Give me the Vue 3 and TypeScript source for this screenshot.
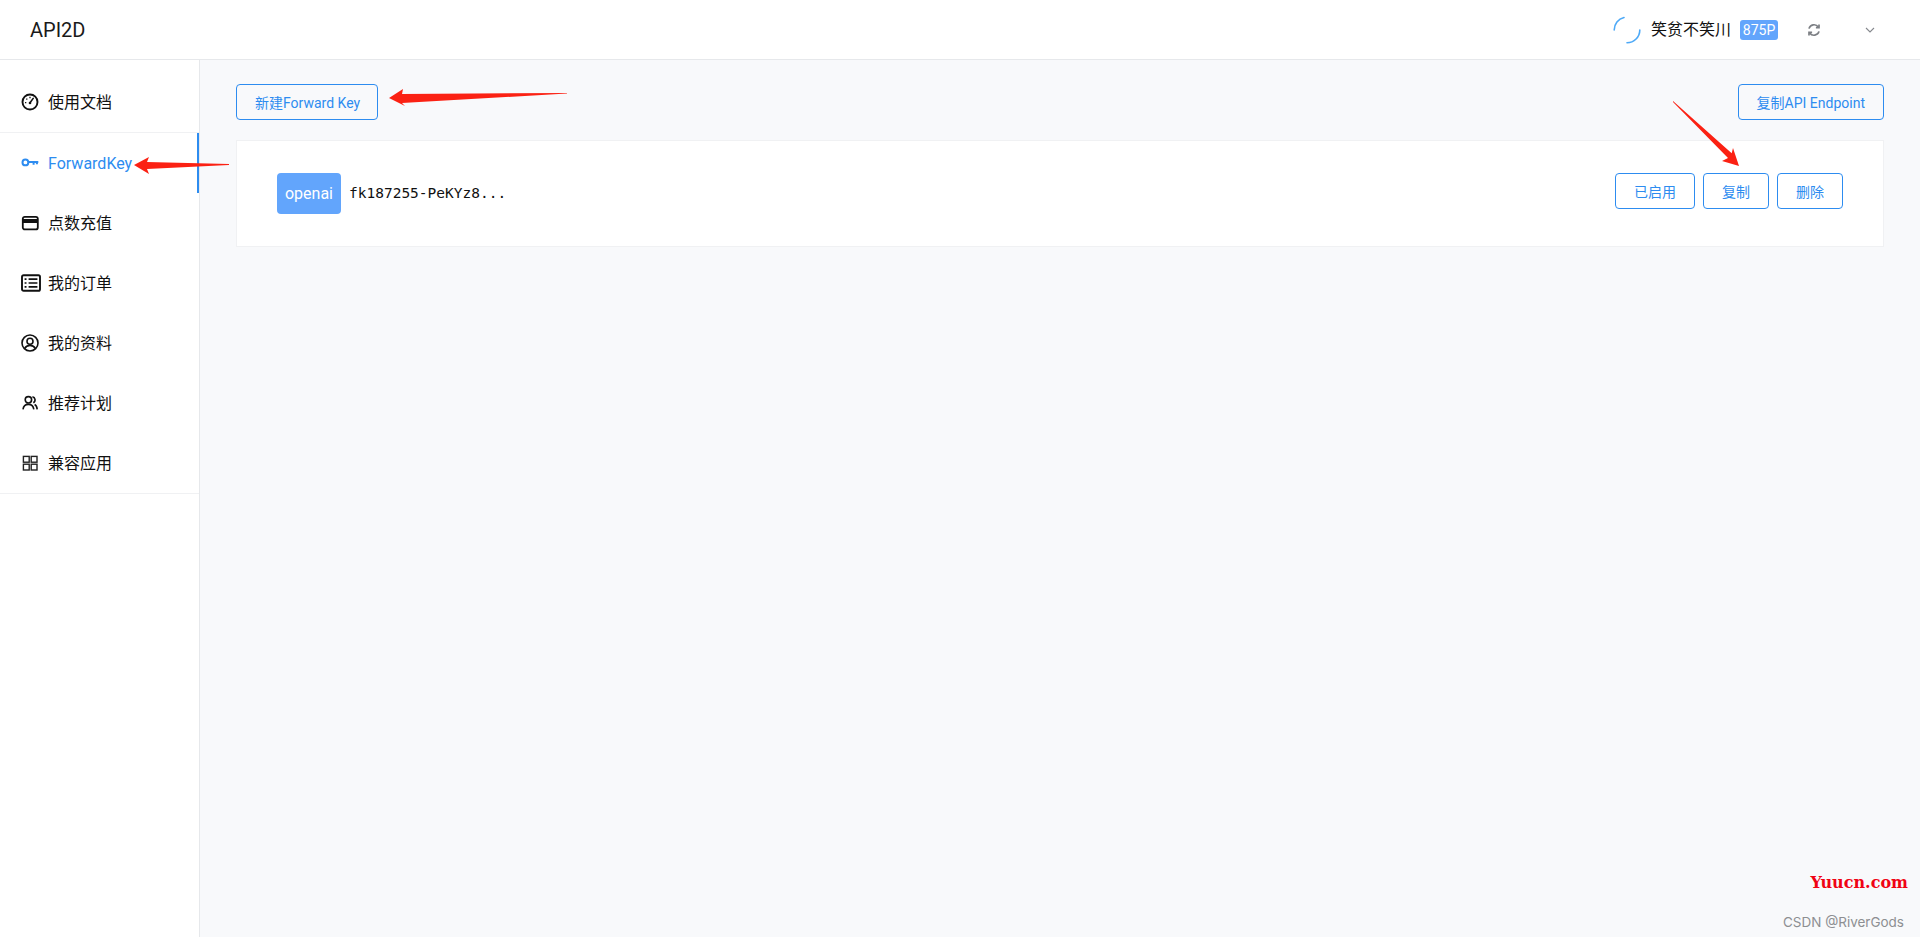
<script setup lang="ts">
const rows = ['使用文档', 'ForwardKey', '点数充值', '我的订单', '我的资料', '推荐计划', '兼容应用']
</script>

<template>
  <div class="page">
    <header class="top">
      <div class="brand">API2D</div>
      <div class="user">
        <svg class="spin" width="28" height="28" viewBox="0 0 28 28" fill="none" stroke="#4da9f7" stroke-width="1.6" stroke-linecap="round">
          <path d="M1.2 14A12.8 12.8 0 0 1 11 1.5" />
          <path d="M26.8 14A12.8 12.8 0 0 1 14 26.8" />
        </svg>
        <span class="name">笑贫不笑川</span>
        <span class="points">875P</span>
        <svg class="refresh" width="14" height="14" viewBox="0 0 14 14" fill="none" stroke="#7c7f84" stroke-width="1.7">
          <path d="M2 5.6A5.2 5.2 0 0 1 11.3 4" />
          <path d="M12 8.4A5.2 5.2 0 0 1 2.7 10" />
          <path d="M12 1.4V4.6H8.9" />
          <path d="M2 12.6V9.4H5.1" />
        </svg>
        <svg class="chev" width="12" height="12" viewBox="0 0 12 12" fill="none" stroke="#85888d" stroke-width="1.1">
          <path d="M2 4l4 4 4-4" />
        </svg>
      </div>
    </header>
    <div class="body">
      <aside class="side">
        <nav class="menu">
          <a v-for="(label, i) in rows" :key="label" class="row" :class="{ first: i === 0, active: i === 1 }">
            <span class="ico">
              <svg v-if="i === 0" width="18" height="18" viewBox="0 0 18 18" fill="none" stroke="#111" stroke-width="1.9">
                <circle cx="9" cy="9" r="7.5" />
                <path d="M9 9.8L12.2 5.4" stroke-linecap="round" stroke-width="1.6" />
                <circle cx="9" cy="10" r="1.3" fill="#111" stroke="none" />
                <path d="M9 3.8v1.4M4 9.6h1.3M5.4 5.6l.9.9" stroke-width="1.3" />
              </svg>
              <svg v-else-if="i === 1" width="18" height="18" viewBox="0 0 18 18" fill="none" stroke="#2d8cf0" stroke-width="2">
                <circle cx="4.4" cy="8.4" r="2.9" />
                <path d="M7.3 8h10M12.6 8v2.8M15.9 8v2.2" />
              </svg>
              <svg v-else-if="i === 2" width="18" height="18" viewBox="0 0 18 18">
                <rect x="1.8" y="2.8" width="15" height="12.6" rx="2" fill="none" stroke="#111" stroke-width="1.8" />
                <rect x="1.8" y="5" width="15" height="4" fill="#111" />
              </svg>
              <svg v-else-if="i === 3" width="20" height="18" viewBox="0 0 20 18" fill="none" stroke="#111" stroke-width="1.9">
                <rect x="1" y="1.2" width="18" height="15.6" rx="1.6" />
                <path d="M7.6 5.2H16.4M7.6 9H16.4M7.6 12.8H16.4" stroke-width="1.7" />
                <path d="M3.6 5.2h1.9M3.6 9h1.9M3.6 12.8h1.9" stroke-width="1.7" />
              </svg>
              <svg v-else-if="i === 4" width="18" height="18" viewBox="0 0 18 18" fill="none" stroke="#111" stroke-width="1.6">
                <circle cx="9" cy="9" r="8" />
                <circle cx="9" cy="7.2" r="3" />
                <path d="M3.6 14.6C5 11.9 7 11.4 9 11.4s4 .5 5.4 3.2" />
              </svg>
              <svg v-else-if="i === 5" width="18" height="18" viewBox="0 0 18 18" fill="none" stroke="#111" stroke-width="1.6">
                <circle cx="7.4" cy="5.8" r="3.2" />
                <path d="M2 15.4C2.4 12 4.6 10.4 7.4 10.4s5 1.6 5.4 5" />
                <path d="M11.4 2.8a3.2 3.2 0 0 1 .9 6M13.6 10.4c1.7.7 2.4 2.6 2.6 5" />
              </svg>
              <svg v-else width="18" height="18" viewBox="0 0 18 18" fill="none" stroke="#222" stroke-width="1.4">
                <rect x="2.4" y="2.4" width="5.8" height="5.8" />
                <rect x="10.2" y="2.4" width="5.8" height="5.8" />
                <rect x="2.4" y="10.2" width="5.8" height="5.8" />
                <rect x="10.2" y="10.2" width="5.8" height="5.8" />
              </svg>
            </span>
            <span class="label">{{ label }}</span>
          </a>
        </nav>
      </aside>
      <main class="main">
        <div class="bar">
          <button class="btn wide new">新建Forward Key</button>
          <button class="btn wide">复制API Endpoint</button>
        </div>
        <section class="card">
          <div class="left">
            <span class="tag">openai</span>
            <span class="key">fk187255-PeKYz8...</span>
          </div>
          <div class="actions">
            <button class="btn small on">已启用</button>
            <button class="btn small">复制</button>
            <button class="btn small">删除</button>
          </div>
        </section>
      </main>
    </div>
    <svg class="arrow a1" width="180" height="20" viewBox="0 0 180 20"><path d="M0 10L14 1 13 6 178 5 178 5.6 13 15 16 18Z" fill="#fb2113" /></svg>
    <svg class="arrow a2" width="96" height="18" viewBox="0 0 96 18"><path d="M0 8L15 0 13 5 95 7 95 8 13 12 15 17Z" fill="#fb2113" /></svg>
    <svg class="arrow a3" width="70" height="70" viewBox="0 0 70 70"><path d="M1 1L59.7 53.3 61 48 67 66 50 61 56 58 1 2Z" fill="#fb2113" /></svg>
    <div class="mark">Yuucn.com</div>
    <div class="csdn">CSDN @RiverGods</div>
  </div>
</template>

<style>
html, body { margin: 0; }
</style>

<style scoped>
.page {
  position: relative;
  height: 937px;
  overflow: hidden;
  display: flex;
  flex-direction: column;
  background: #f8f9fb;
  color: #111;
  font-family: Roboto, "Noto Sans CJK SC", sans-serif;
}
.top {
  height: 60px;
  box-sizing: border-box;
  flex: none;
  display: flex;
  justify-content: space-between;
  align-items: center;
  padding: 0 44px 0 30px;
  background: #fff;
  border-bottom: 1px solid #e6e8eb;
}
.brand { font-size: 20px; color: #1a1a1a; }
.user { display: flex; align-items: center; }
.spin { margin-right: 10px; }
.name { font-size: 16px; margin-right: 9px; margin-bottom: 3px; }
.points {
  width: 38px;
  height: 20px;
  border-radius: 3px;
  background: #62a5fc;
  color: #fff;
  font-size: 14px;
  line-height: 20px;
  text-align: center;
  margin-right: 29px;
}
.refresh { margin-right: 43px; }
.body { flex: 1; display: flex; min-height: 0; }
.side {
  width: 200px;
  flex: none;
  box-sizing: border-box;
  background: #fff;
  border-right: 1px solid #e6e8eb;
  padding-top: 12px;
}
.menu { border-bottom: 1px solid #f0f1f3; }
.row {
  position: relative;
  height: 60px;
  display: flex;
  align-items: center;
  padding-left: 21px;
  font-size: 16px;
}
.label { margin-bottom: 2px; }
.row.first { border-bottom: 1px solid #f0f1f3; }
.row.active { color: #2d8cf0; }
.row.active .label { margin-bottom: 0; }
.row.active::after {
  content: "";
  position: absolute;
  top: 0;
  bottom: 0;
  right: 0;
  width: 2px;
  background: #2d8cf0;
}
.ico { width: 27px; flex: none; display: flex; align-items: center; }
.main { flex: 1; min-width: 0; padding: 24px 36px 0; }
.bar { display: flex; justify-content: space-between; margin-bottom: 20px; }
.btn {
  box-sizing: border-box;
  height: 36px;
  border: 1px solid #2d8cf0;
  border-radius: 4px;
  background: transparent;
  color: #2d8cf0;
  font-family: inherit;
  font-size: 14px;
  padding: 0;
}
.wide { padding: 0 18px; }
.new { padding-right: 17px; }
.small { width: 66px; }
.small.on { width: 80px; }
.card {
  box-sizing: border-box;
  height: 107px;
  background: #fff;
  border: 1px solid #f0f1f3;
  display: flex;
  align-items: flex-start;
  justify-content: space-between;
  padding: 32px 40px 0;
}
.left { display: flex; align-items: center; }
.tag {
  width: 64px;
  height: 41px;
  border-radius: 4px;
  background: #62a5fc;
  color: #fff;
  font-size: 16px;
  line-height: 41px;
  text-align: center;
  margin-right: 8px;
}
.key {
  font-family: "DejaVu Sans Mono", monospace;
  font-size: 14.5px;
  margin-bottom: 2px;
}
.actions { display: flex; gap: 8px; }
.arrow { position: absolute; }
.a1 { left: 389px; top: 88px; }
.a2 { left: 134px; top: 157px; }
.a3 { left: 1672px; top: 100px; }
.mark {
  position: absolute;
  right: 12px;
  top: 873px;
  color: #f00314;
  font: bold 16px "DejaVu Serif", serif;
}
.csdn {
  position: absolute;
  right: 16px;
  top: 914px;
  color: #8d8f92;
  font: 13.5px "Inter", sans-serif;
}
</style>
